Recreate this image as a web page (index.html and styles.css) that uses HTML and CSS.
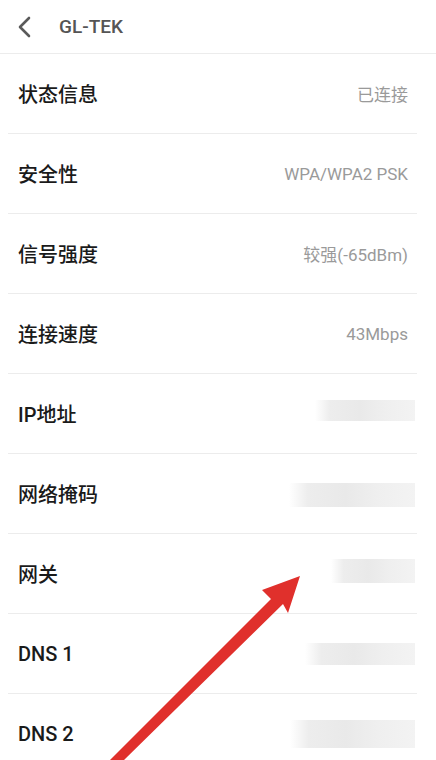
FILE: index.html
```html
<!DOCTYPE html>
<html lang="zh-CN">
<head>
    <meta charset="UTF-8">
    <meta name="viewport" content="width=device-width, initial-scale=1.0">
    <title>GL-TEK</title>
    <link rel="stylesheet" href="styles.css">
</head>
<body>
    <div class="page">
        <header class="top-bar">
            <svg class="back-icon" width="14" height="22" viewBox="0 0 14 22">
                <path d="M12 2 L3 11 L12 20" fill="none" stroke="#5a5a5a" stroke-width="2.6" stroke-linecap="round" stroke-linejoin="round"/>
            </svg>
            <span class="title">GL-TEK</span>
        </header>

        <ul class="info-list">
            <li class="info-row"><span class="label">状态信息</span><span class="value">已连接</span></li>
            <li class="info-row"><span class="label">安全性</span><span class="value">WPA/WPA2 PSK</span></li>
            <li class="info-row"><span class="label">信号强度</span><span class="value">较强(-65dBm)</span></li>
            <li class="info-row"><span class="label">连接速度</span><span class="value">43Mbps</span></li>
            <li class="info-row"><span class="label">IP地址</span><span class="value"><span class="mask mask-ip"></span></span></li>
            <li class="info-row"><span class="label">网络掩码</span><span class="value"><span class="mask mask-net"></span></span></li>
            <li class="info-row"><span class="label">网关</span><span class="value"><span class="mask mask-gw"></span></span></li>
            <li class="info-row"><span class="label">DNS 1</span><span class="value"><span class="mask mask-dns1"></span></span></li>
            <li class="info-row"><span class="label">DNS 2</span><span class="value"><span class="mask mask-dns2"></span></span></li>
        </ul>

        <!-- red pointer drawn on top of the screenshot -->
        <svg class="arrow" width="436" height="760" viewBox="0 0 436 760">
            <polygon points="300,576 262,590 271,599 110,760 124,760 283,604 288,613" fill="#e0302c"/>
        </svg>
    </div>
</body>
</html>
```

FILE: styles.css
```css
body {
    margin: 0;
    padding: 0;
    background-color: #ffffff;
    font-family: Roboto, "Noto Sans", "Noto Sans CJK SC", sans-serif;
}

.page {
    position: relative;
    width: 436px;
    height: 760px;
    overflow: hidden;
}

.top-bar {
    display: flex;
    align-items: center;
    height: 53px;
    padding-left: 17px;
    border-bottom: 1px solid #ececec;
}

.back-icon {
    display: block;
}

.title {
    margin-left: 28px;
    font-size: 19px;
    font-weight: 500;
    color: #555555;
}

.info-list {
    list-style: none;
    margin: 0 19px 0 8px;
    padding: 0;
}

.info-row {
    display: flex;
    align-items: center;
    justify-content: space-between;
    height: 79px;
    padding: 0 9px 0 10px;
    border-bottom: 1px solid #ececec;
}

.label {
    font-family: Roboto, "Noto Sans CJK SC", sans-serif;
    font-size: 20px;
    font-weight: 500;
    color: #1a1a1a;
}

.value {
    display: flex;
    align-items: center;
    font-family: Roboto, "Noto Sans CJK SC", sans-serif;
    font-size: 17px;
    color: #9a9a9a;
}

.mask {
    display: block;
    margin-right: -7px;
    background: linear-gradient(90deg, rgba(236, 236, 236, 0) 0%, #ededed 15%, #e9e9e9 45%, #efefef 70%, #f3f3f3 100%);
}

.mask-ip {
    width: 100px;
    height: 21px;
    margin-top: -6px;
}

.mask-net {
    width: 126px;
    height: 24px;
    margin-top: 2px;
}

.mask-gw {
    width: 84px;
    height: 24px;
    margin-top: -6px;
}

.mask-dns1 {
    width: 110px;
    height: 22px;
    margin-top: 0;
}

.mask-dns2 {
    width: 125px;
    height: 28px;
    margin-top: 0;
}

.arrow {
    position: absolute;
    top: 0;
    left: 0;
    pointer-events: none;
}
```
